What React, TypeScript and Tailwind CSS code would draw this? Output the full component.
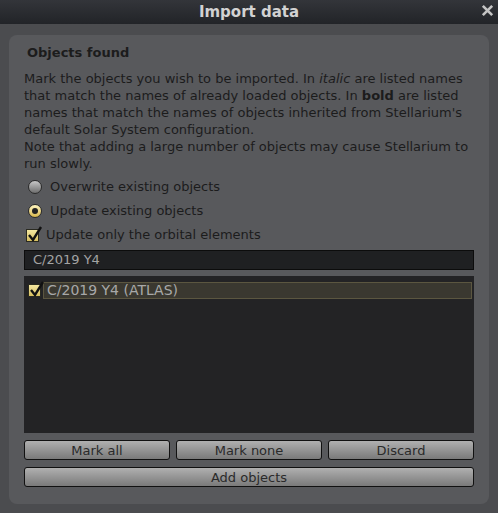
import React from 'react';

const font = { fontFamily: '"DejaVu Sans", "Liberation Sans", sans-serif' };

const CheckBox: React.FC = () => (
  <span className="relative inline-block w-[13px] h-[13px] border border-[#2a2a20] bg-gradient-to-b from-[#f4e7a0] to-[#d8c060] shrink-0">
    <svg className="absolute -top-[5px] -left-[1px]" width="18" height="18" viewBox="0 0 18 18">
      <path d="M3 10 L7 15 L15 2" fill="none" stroke="#111" strokeWidth="2.4" strokeLinejoin="miter" />
    </svg>
  </span>
);

const Radio: React.FC<{ checked?: boolean }> = ({ checked }) => (
  <span
    className={`flex items-center justify-center w-[14px] h-[14px] rounded-full border border-[#2b2b2b] shrink-0 ${
      checked ? 'bg-gradient-to-b from-[#fff6c0] to-[#d8b84a]' : 'bg-gradient-to-b from-[#c8c8c8] to-[#6e6e6e]'
    }`}
  >
    {checked && <span className="w-[6px] h-[6px] rounded-full bg-[#222]" />}
  </span>
);

const Btn: React.FC<{ label: string; className?: string }> = ({ label, className }) => (
  <button
    className={`h-[20px] rounded-[3px] border border-[#111] bg-gradient-to-b from-[#b0b0b0] to-[#7a7a7a] text-[13px] leading-none text-[#2a2a2a] ${className || ''}`}
  >
    {label}
  </button>
);

const App: React.FC = () => {
  return (
    <div className="w-[498px] h-[513px] bg-[#4b4c4f] flex flex-col overflow-hidden" style={font}>
      {/* Title bar */}
      <div className="relative h-[24px] bg-gradient-to-b from-[#33353a] to-[#222428] flex items-center justify-center">
        <span className="text-[15px] font-bold text-[#d2d2d2]">Import data</span>
        <span className="absolute right-[3px] top-[3px]">
          <svg width="15" height="15" viewBox="0 0 16 16">
            <path d="M3 3 L13 13 M13 3 L3 13" stroke="#c4c4c4" strokeWidth="2.8" />
          </svg>
        </span>
      </div>

      {/* Group box */}
      <div className="pl-[9px] pt-[11px]">
        <div className="w-[480px] h-[469px] rounded-[8px] bg-[#58595c] px-[15px] pt-[9px] flex flex-col text-[#1c1c1c] text-[13px]">
          <div className="font-bold pl-[3px] h-[18px] leading-[18px]">Objects found</div>
          <div className="mt-[8px] leading-[17px]">
            Mark the objects you wish to be imported. In <i>italic</i> are listed names that match the names of
            already loaded objects. In <b>bold</b> are listed names that match the names of objects inherited from
            Stellarium's default Solar System configuration.
            <br />
            Note that adding a large number of objects may cause Stellarium to run slowly.
          </div>

          <div className="mt-[8px] flex flex-col gap-[10px] pl-[4px]">
            <label className="flex items-center gap-[8px] h-[14px]">
              <Radio />
              <span>Overwrite existing objects</span>
            </label>
            <label className="flex items-center gap-[8px] h-[14px]">
              <Radio checked />
              <span>Update existing objects</span>
            </label>
          </div>
          <label className="mt-[10px] flex items-center gap-[7px] h-[14px] pl-[2px]">
            <CheckBox />
            <span>Update only the orbital elements</span>
          </label>

          <div className="mt-[8px] h-[20px] border border-[#0c0c0c] bg-[#1f2022] text-[#a4a4a4] pl-[8px] flex items-center">
            C/2019 Y4
          </div>

          <div className="mt-[6px] h-[157px] bg-[#232325] pt-[6px] pl-[4px] pr-[2px]">
            <div className="flex items-center gap-[2px]">
              <CheckBox />
              <div className="flex-1 h-[17px] border border-[#5b5640] bg-[#3a3830] text-[#a8a8a8] pl-[3px] flex items-center text-[14px]">
                C/2019 Y4 (ATLAS)
              </div>
            </div>
          </div>

          <div className="mt-[7px] flex gap-[6px]">
            <Btn label="Mark all" className="flex-1" />
            <Btn label="Mark none" className="flex-1" />
            <Btn label="Discard" className="flex-1" />
          </div>
          <Btn label="Add objects" className="mt-[7px] w-full" />
        </div>
      </div>
    </div>
  );
};

export default App;
